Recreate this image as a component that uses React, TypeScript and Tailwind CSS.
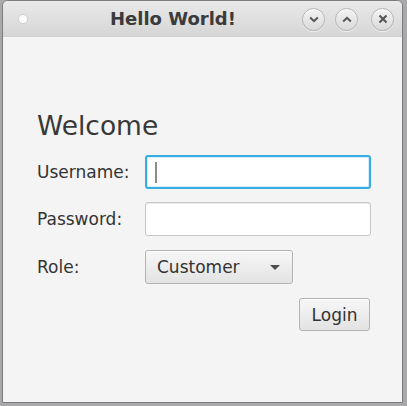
import React from "react";

function CircleBtn({ children }: { children: React.ReactNode }) {
  return (
    <div className="w-[23px] h-[23px] rounded-full border border-[#b4b4b4] bg-gradient-to-b from-[#f3f3f3] to-[#dadada] flex items-center justify-center shadow-[inset_0_1px_0_#ffffff,0_1px_0_#ececec]">
      {children}
    </div>
  );
}

export default function App() {
  return (
    <div
      className="w-[407px] h-[406px] bg-[#a9a9ab] overflow-hidden"
      style={{ fontFamily: '"DejaVu Sans", "Liberation Sans", sans-serif' }}
    >
      <div className="ml-[2px] w-[401px] h-[403px] border border-[#7c7c7c] rounded-t-[6px] overflow-hidden flex flex-col bg-[#f4f4f4]">
        {/* Title bar */}
        <div className="h-[36px] shrink-0 bg-gradient-to-b from-[#e9e9e9] to-[#d6d6d6] flex items-center border-b border-[#d0d0d0]">
          <div className="ml-[16px] w-[8px] h-[8px] rounded-full bg-[#fbfbfb] shadow-[0_0_0_1px_#cfcfcf]" />
          <div className="ml-[83px] text-[18px] leading-[22px] font-bold text-[#3b3b3b]">
            Hello World!
          </div>
          <div className="flex-1" />
          <div className="flex items-center gap-[10px] mr-[8px] mt-[1px]">
            <CircleBtn>
              <svg width="10" height="7" viewBox="0 0 10 7">
                <path d="M1.2 1.5 L5 5.2 L8.8 1.5" fill="none" stroke="#545454" strokeWidth="2" />
              </svg>
            </CircleBtn>
            <div>
              <CircleBtn>
                <svg width="10" height="7" viewBox="0 0 10 7">
                  <path d="M1.2 5.5 L5 1.8 L8.8 5.5" fill="none" stroke="#545454" strokeWidth="2" />
                </svg>
              </CircleBtn>
            </div>
            <div className="ml-[3px]">
              <CircleBtn>
                <svg width="10" height="10" viewBox="0 0 10 10">
                  <path d="M1.5 1.5 L8.5 8.5 M8.5 1.5 L1.5 8.5" fill="none" stroke="#545454" strokeWidth="2" />
                </svg>
              </CircleBtn>
            </div>
          </div>
        </div>

        {/* Content */}
        <div className="flex flex-col pl-[34px] pt-[74px] text-[#333333]">
          <div className="text-[26.5px] leading-[30px] text-[#383838]">Welcome</div>

          <div className="flex items-center mt-[14px]">
            <div className="w-[108px] text-[17px] leading-[20px]">Username:</div>
            <div className="w-[226px] h-[34px] rounded-[3px] border-2 border-[#35ade2] bg-white shadow-[inset_0_0_0_1px_#d6eef9] flex items-center pl-[8px]">
              <div className="w-[2px] h-[21px] bg-[#8c8c8c]" />
            </div>
          </div>

          <div className="flex items-center mt-[13px]">
            <div className="w-[108px] text-[17px] leading-[20px]">Password:</div>
            <div className="w-[226px] h-[34px] rounded-[3px] border border-[#c6c6c6] bg-white shadow-[inset_0_1px_1px_#ececec]" />
          </div>

          <div className="flex items-center mt-[14px]">
            <div className="w-[108px] text-[17px] leading-[20px]">Role:</div>
            <div className="w-[148px] h-[34px] rounded-[3px] border border-[#b3b3b3] bg-gradient-to-b from-[#f7f7f7] to-[#e3e3e3] flex items-center pl-[11px] pr-[12px] shadow-[inset_0_1px_0_#ffffff]">
              <span className="text-[17px] leading-[20px] text-[#333]">Customer</span>
              <div className="flex-1" />
              <svg width="10" height="5" viewBox="0 0 10 5">
                <path d="M0 0 L10 0 L5 5 Z" fill="#4d4d4d" />
              </svg>
            </div>
          </div>

          <div className="flex w-[333px] justify-end mt-[14px]">
            <div className="w-[71px] h-[33px] rounded-[3px] border border-[#b3b3b3] bg-gradient-to-b from-[#f7f7f7] to-[#e3e3e3] flex items-center justify-center text-[17px] leading-[20px] text-[#333] shadow-[inset_0_1px_0_#ffffff]">
              Login
            </div>
          </div>
        </div>
      </div>
    </div>
  );
}
